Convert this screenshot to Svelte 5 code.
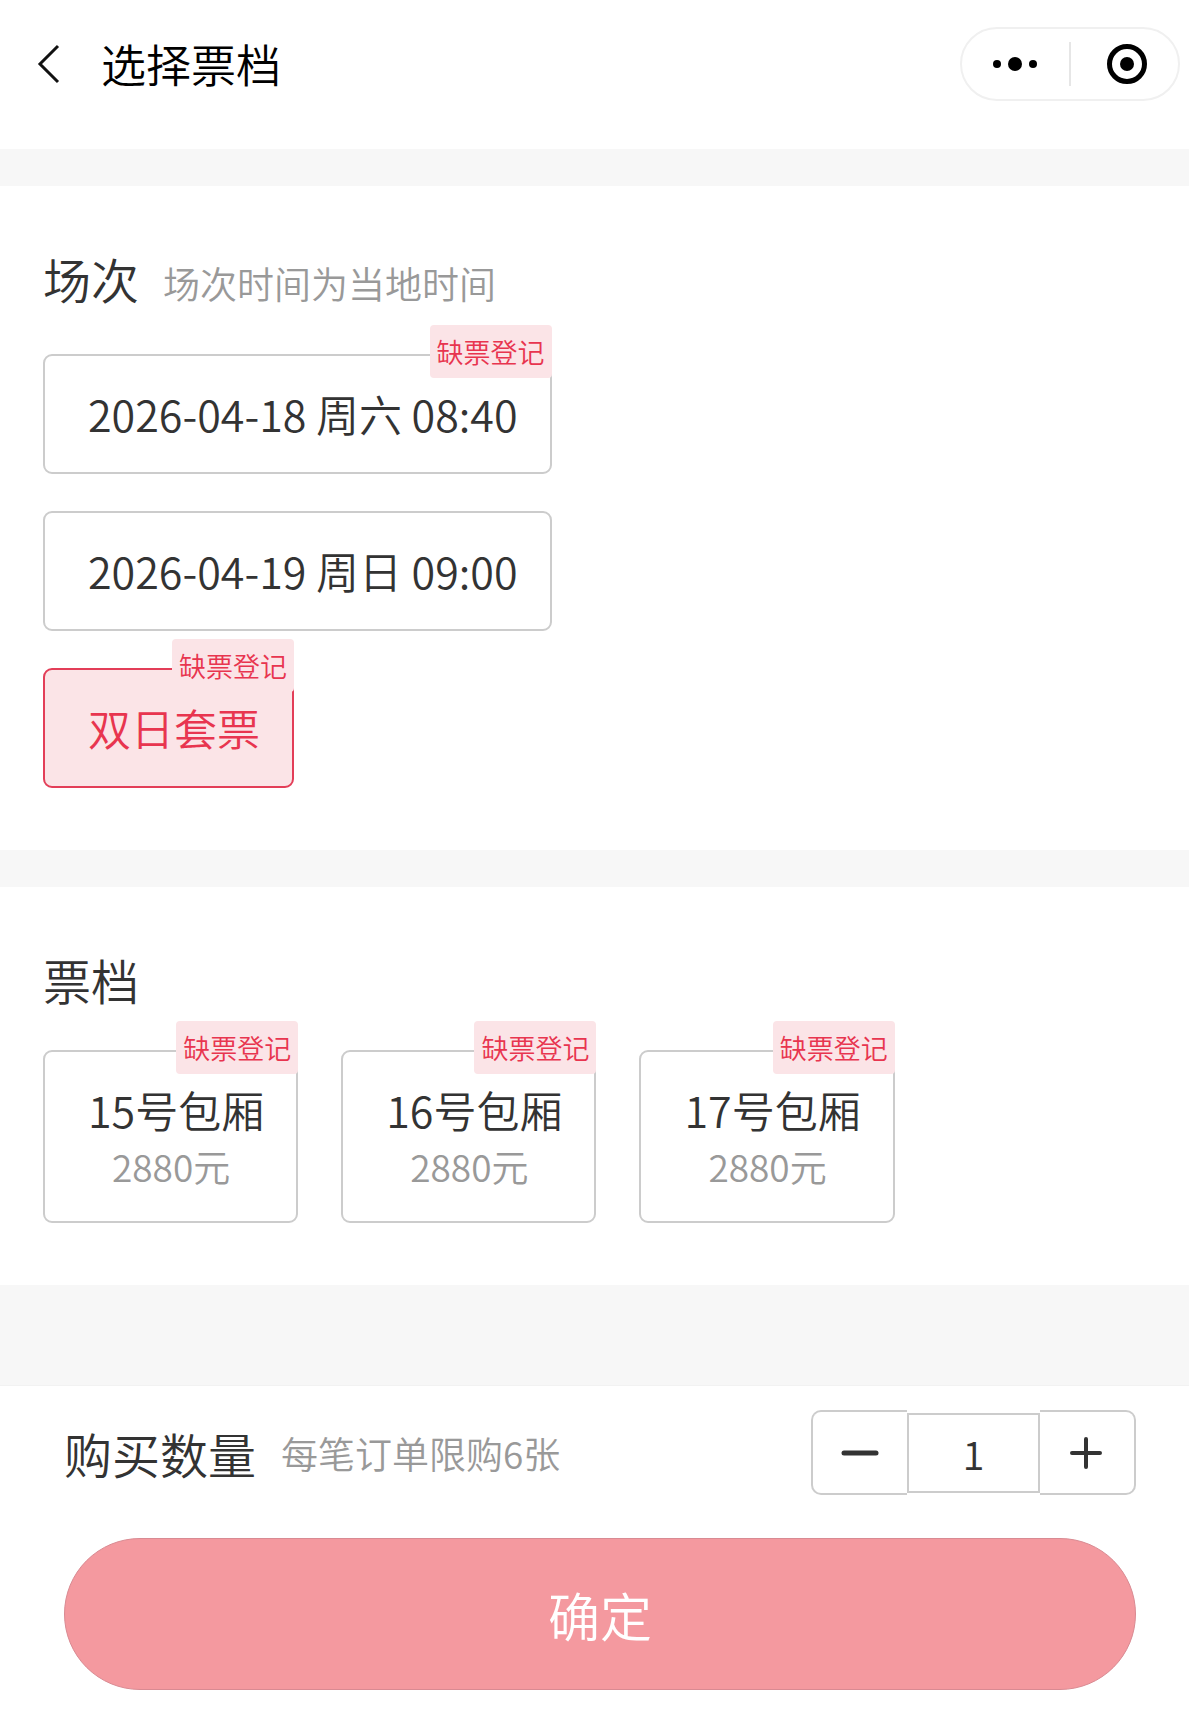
<script lang="ts">
    type Session = {
        id: number;
        label: string;
        soldOut: boolean;
    };

    type Tier = {
        id: number;
        name: string;
        price: number;
        soldOut: boolean;
    };

    const sessions: Session[] = [
        {id: 1, label: '2026-04-18 周六 08:40', soldOut: true},
        {id: 2, label: '2026-04-19 周日 09:00', soldOut: false},
        {id: 3, label: '双日套票', soldOut: true}
    ];

    const tiers: Tier[] = [
        {id: 15, name: '15号包厢', price: 2880, soldOut: true},
        {id: 16, name: '16号包厢', price: 2880, soldOut: true},
        {id: 17, name: '17号包厢', price: 2880, soldOut: true}
    ];

    const limit = 6;

    let session = $state(3);
    let tier = $state(0);
    let quantity = $state(1);

    function changeQuantity(step: number) {
        quantity = Math.min(limit, Math.max(1, Number(quantity) + step));
    }
</script>

<div class="page">
    <header>
        <button class="back" type="button" aria-label="返回">
            <svg width="24" height="42" viewBox="0 0 24 42" fill="none" stroke="#111" stroke-width="3">
                <path d="M21 3 L3 21 L21 39" />
            </svg>
        </button>
        <h1>选择票档</h1>
        <div class="capsule">
            <button type="button" aria-label="更多">
                <svg width="46" height="16" viewBox="0 0 46 16">
                    <circle cx="4" cy="8" r="4" />
                    <circle cx="22" cy="8" r="7" />
                    <circle cx="40" cy="8" r="4" />
                </svg>
            </button>
            <span class="divider"></span>
            <button class="close" type="button" aria-label="关闭">
                <svg width="42" height="42" viewBox="0 0 42 42">
                    <circle cx="21" cy="21" r="17.5" fill="none" stroke="#000" stroke-width="5" />
                    <circle cx="21" cy="21" r="7" />
                </svg>
            </button>
        </div>
    </header>

    <section>
        <div class="heading">
            <h2>场次</h2>
            <span class="hint">场次时间为当地时间</span>
        </div>
        <div class="sessions">
            {#each sessions as item (item.id)}
                <button
                    class="option"
                    class:selected={session === item.id}
                    type="button"
                    aria-pressed={session === item.id}
                    onclick={() => (session = item.id)}
                >
                    {item.label}
                    {#if item.soldOut}<span class="badge">缺票登记</span>{/if}
                </button>
            {/each}
        </div>
    </section>

    <section>
        <div class="heading">
            <h2>票档</h2>
        </div>
        <div class="tiers">
            {#each tiers as item (item.id)}
                <button
                    class="option tier"
                    class:selected={tier === item.id}
                    type="button"
                    aria-pressed={tier === item.id}
                    onclick={() => (tier = item.id)}
                >
                    <span>{item.name}</span>
                    <span class="price">{item.price}元</span>
                    {#if item.soldOut}<span class="badge">缺票登记</span>{/if}
                </button>
            {/each}
        </div>
    </section>

    <footer>
        <div class="amount">
            <label for="quantity">购买数量</label>
            <span class="hint">每笔订单限购{limit}张</span>
            <div class="stepper">
                <button class="minus" type="button" aria-label="减少" onclick={() => changeQuantity(-1)}>
                    <svg width="40" height="40" viewBox="0 0 40 40" stroke="#333" stroke-width="5" stroke-linecap="round">
                        <path d="M4 20 H36" />
                    </svg>
                </button>
                <input id="quantity" type="text" inputmode="numeric" bind:value={quantity} />
                <button class="plus" type="button" aria-label="增加" onclick={() => changeQuantity(1)}>
                    <svg width="40" height="40" viewBox="0 0 40 40" stroke="#333" stroke-width="4" stroke-linecap="round">
                        <path d="M5 20 H33 M19 6 V34" />
                    </svg>
                </button>
            </div>
        </div>
        <button class="confirm" type="button">确定</button>
    </footer>
</div>

<style>
    :global(body) {
        background: #f7f7f7;
    }

    .page {
        font-family: "Noto Sans CJK SC", "Noto Sans", sans-serif;
        font-weight: 350;
        color: #333;
    }

    button, input {
        box-sizing: border-box;
        margin: 0;
        padding: 0;
        border: none;
        background: none;
        font-family: inherit;
        font-weight: inherit;
        color: inherit;
    }

    button {
        cursor: pointer;
    }

    svg {
        display: block;
    }

    h1, h2 {
        margin: 0;
        font-weight: inherit;
    }

    header {
        display: flex;
        align-items: center;
        padding: 27px 9px 48px 37px;
        background: #fff;
    }

    h1 {
        flex: 1;
        margin-left: 40px;
        font-size: 45px;
        line-height: 64px;
        color: #000;
    }

    .capsule {
        display: flex;
        align-items: center;
        box-sizing: border-box;
        width: 220px;
        height: 74px;
        border: 2px solid #f0f0f0;
        border-radius: 37px;
    }

    .capsule button {
        flex: 1;
        display: flex;
        justify-content: center;
    }

    .close svg {
        margin-left: 4px;
    }

    .divider {
        width: 2px;
        height: 44px;
        background: #e6e6e6;
    }

    section {
        margin-top: 37px;
        padding: 57px 43px 62px;
        background: #fff;
    }

    .heading {
        display: flex;
        align-items: baseline;
        gap: 24px;
    }

    h2, label {
        font-size: 48px;
        line-height: 70px;
    }

    .hint {
        font-size: 37px;
        color: #999;
    }

    .sessions {
        display: flex;
        flex-direction: column;
        align-items: flex-start;
        gap: 37px;
        margin-top: 41px;
    }

    .tiers {
        display: flex;
        flex-wrap: wrap;
        gap: 43px;
        margin-top: 36px;
    }

    .option {
        position: relative;
        padding: 29px 32px 31px 43px;
        border: 2px solid #ccc;
        border-radius: 9px;
        font-size: 43px;
        line-height: 56px;
    }

    .tier {
        display: flex;
        flex-direction: column;
        align-items: center;
        padding-bottom: 27px;
    }

    .tier span:first-child {
        line-height: 57px;
    }

    .price {
        padding-right: 10px;
        font-size: 37px;
        color: #999;
    }

    .selected {
        border-color: #e33e58;
        background: #fbe4e7;
        color: #e8354f;
    }

    .badge {
        position: absolute;
        top: -31px;
        right: -2px;
        padding: 0 7px;
        border-radius: 4px;
        background: #fbe4e7;
        font-size: 27px;
        line-height: 53px;
        color: #e8354f;
    }

    footer {
        margin-top: 100px;
        padding: 24px 53px 32px 64px;
        border-top: 1px solid #f2f2f2;
        background: #fff;
    }

    .amount {
        display: flex;
        align-items: center;
        gap: 25px;
    }

    .stepper {
        display: flex;
        align-items: center;
        margin-left: auto;
    }

    .stepper button {
        display: flex;
        align-items: center;
        justify-content: center;
        width: 96px;
        height: 85px;
        border: 2px solid #ccc;
    }

    .stepper .minus {
        border-right: none;
        border-radius: 10px 0 0 10px;
    }

    .stepper .plus {
        border-left: none;
        border-radius: 0 10px 10px 0;
    }

    .stepper input {
        width: 133px;
        height: 80px;
        border: 2px solid #ccc;
        font-size: 40px;
        text-align: center;
    }

    .confirm {
        width: 100%;
        height: 152px;
        margin-top: 43px;
        border: 1px solid #d98a92;
        border-radius: 76px;
        background: #f4999f;
        font-size: 52px;
        color: #fff;
    }
</style>
